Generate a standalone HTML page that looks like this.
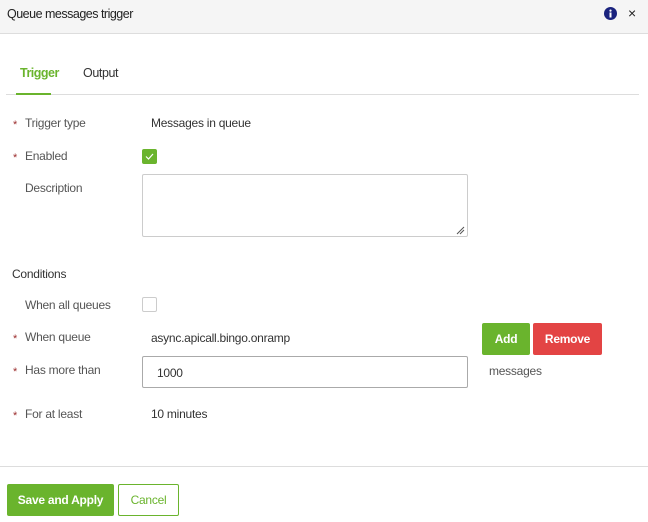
<!DOCTYPE html>
<html><head><style>
*{margin:0;padding:0;box-sizing:border-box}
body{width:648px;height:522px;background:#fff;font-family:"Liberation Sans",sans-serif;font-size:12px;color:#333;position:relative;overflow:hidden;letter-spacing:-0.25px}
.a{position:absolute;white-space:nowrap}
.hdr{position:absolute;left:0;top:0;width:648px;height:34px;background:#f5f5f5;border-bottom:1px solid #ddd}
.lbl{color:#555}
.st{color:#9b2c2c;font-size:11px}
.btn{position:absolute;color:#fff;font-weight:bold;text-align:center;border-radius:2px}
</style></head><body>
<div class="hdr"></div>
<div class="a" style="left:7px;top:7px;font-size:12.5px;color:#222;letter-spacing:-0.5px">Queue messages trigger</div>
<svg class="a" style="left:604px;top:7px" width="13" height="13" viewBox="0 0 13 13"><circle cx="6.5" cy="6.5" r="6.5" fill="#1a237e"/><rect x="5.5" y="5.5" width="2" height="5" fill="#fff"/><circle cx="6.5" cy="3.6" r="1.1" fill="#fff"/></svg>
<div class="a" style="left:628px;top:5px;font-size:14px;color:#222">×</div>
<div class="a" style="left:20px;top:66px;font-size:12.5px;font-weight:bold;color:#6ab42d;letter-spacing:-0.5px">Trigger</div>
<div class="a" style="left:83px;top:66px;font-size:12.5px;color:#333;letter-spacing:-0.4px">Output</div>
<div class="a" style="left:6px;top:94px;width:633px;height:1px;background:#ddd"></div>
<div class="a" style="left:16px;top:93px;width:35px;height:2px;background:#6ab42d"></div>

<div class="a st" style="left:13px;top:119px">*</div><div class="a lbl" style="left:25px;top:116px">Trigger type</div>
<div class="a" style="left:151px;top:116px">Messages in queue</div>
<div class="a st" style="left:13px;top:152px">*</div><div class="a lbl" style="left:25px;top:149px">Enabled</div>
<div class="a" style="left:142px;top:149px;width:15px;height:15px;background:#6ab42d;border-radius:2px"><svg width="15" height="15"><path d="M4 7.5l2.5 2.5 4.5-5" stroke="#fff" stroke-width="1.2" fill="none"/></svg></div>
<div class="a lbl" style="left:25px;top:181px">Description</div>
<div class="a" style="left:142px;top:174px;width:326px;height:63px;border:1px solid #ccc;border-radius:2px"></div>
<svg class="a" style="left:456px;top:226px" width="9" height="9"><path d="M1 8L8 1M4 8L8 4" stroke="#555" stroke-width="1"/></svg>

<div class="a" style="left:12px;top:267px;color:#333">Conditions</div>
<div class="a lbl" style="left:25px;top:298px">When all queues</div>
<div class="a" style="left:142px;top:297px;width:15px;height:15px;border:1px solid #ccc;border-radius:2px"></div>
<div class="a st" style="left:13px;top:333px">*</div><div class="a lbl" style="left:25px;top:330px">When queue</div>
<div class="a" style="left:151px;top:331px">async.apicall.bingo.onramp</div>
<div class="btn" style="left:482px;top:323px;width:48px;height:32px;line-height:32px;background:#6ab42d">Add</div>
<div class="btn" style="left:533px;top:323px;width:69px;height:32px;line-height:32px;background:#e34444">Remove</div>
<div class="a st" style="left:13px;top:366px">*</div><div class="a lbl" style="left:25px;top:363px">Has more than</div>
<div class="a" style="left:142px;top:356px;width:326px;height:32px;border:1px solid #aaa;border-radius:2px;padding:9px 0 0 14px">1000</div>
<div class="a lbl" style="left:489px;top:364px">messages</div>
<div class="a st" style="left:13px;top:410px">*</div><div class="a lbl" style="left:25px;top:407px">For at least</div>
<div class="a" style="left:151px;top:407px">10 minutes</div>

<div class="a" style="left:0;top:466px;width:648px;height:1px;background:#ddd"></div>
<div class="btn" style="left:7px;top:484px;width:107px;height:32px;line-height:32px;background:#6ab42d">Save and Apply</div>
<div class="a" style="left:118px;top:484px;width:61px;height:32px;line-height:30px;border:1px solid #6ab42d;color:#6ab42d;text-align:center;border-radius:2px">Cancel</div>
</body></html>
